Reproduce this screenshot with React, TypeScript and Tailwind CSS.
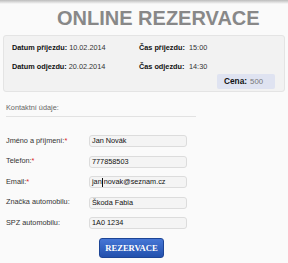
import React from "react";

const info = [
  [
    ["Datum příjezdu:", "10.02.2014"],
    ["Čas příjezdu:", "15:00"],
  ],
  [
    ["Datum odjezdu:", "20.02.2014"],
    ["Čas odjezdu:", "14:30"],
  ],
];

const fields = [
  { label: "Jméno a příjmení:", req: true, value: "Jan Novák" },
  { label: "Telefon:", req: true, value: "777858503" },
  { label: "Email:", req: true, value: "jan|novak@seznam.cz" },
  { label: "Značka automobilu:", req: false, value: "Škoda Fabia" },
  { label: "SPZ automobilu:", req: false, value: "1A0 1234" },
];

export default function App() {
  return (
    <div className="w-[288px] h-[263px] overflow-hidden bg-[#fafafa] font-['Liberation_Sans',Arial,sans-serif] text-[#333]">
      <div className="h-[4px] bg-linear-to-b from-[#bcbcbc] to-[#fafafa]" />
      <h1 className="mt-[4px] pl-[57px] text-[20px] leading-[20px] font-bold text-[#888]">ONLINE REZERVACE</h1>

      {/* Summary */}
      <div className="mt-[7px] mx-[3px] h-[57px] bg-[#f2f2f2] border border-[#e4e4e4] rounded-[3px] pt-[6px] pl-[8px]">
        {info.map((row, i) => (
          <div key={i} className={`flex items-center h-[12px] text-[7.3px] leading-[12px] whitespace-nowrap ${i ? "mt-[7px]" : ""}`}>
            <span className="w-[127px]">
              <b className="text-[#111] mr-[2px]">{row[0][0]}</b>
              {row[0][1]}
            </span>
            <span className="w-[50px] font-bold text-[#111]">{row[1][0]}</span>
            <span>{row[1][1]}</span>
          </div>
        ))}
        <div className="flex justify-end mt-[1px] pr-[9px]">
          <div className="w-[58px] h-[15px] bg-[#dfe3f1] rounded-[2px] flex items-center pl-[7px]">
            <span className="text-[8.3px] font-bold text-[#111]">Cena:</span>
            <span className="ml-[3px] text-[7.8px] text-[#777]">500</span>
          </div>
        </div>
      </div>

      {/* Contact */}
      <div className="mt-[12px] pl-[6px] text-[7.3px] leading-[8px] h-[8px] text-[#666]">Kontaktní údaje:</div>
      <div className="mt-[4px] ml-[6px] w-[190px] h-px bg-[#e2e2e2]" />

      <div className="mt-[18px] flex flex-col gap-[8.5px]">
        {fields.map((f) => (
          <div key={f.label} className="flex items-center h-[12px] pl-[6px] text-[7.3px]">
            <span className="w-[83px] text-[#333]">
              {f.label}
              {f.req && <span className="text-[#e02020]">*</span>}
            </span>
            <div className="w-[98px] h-[12px] bg-[#f4f4f4] border border-[#dcdcdc] rounded-[3px] pl-[2px] flex items-center text-[#111] leading-none">
              {f.value.includes("|") ? (
                <>
                  {f.value.split("|")[0]}
                  <span className="inline-block w-px h-[9px] bg-[#111] mx-[0.5px]" />
                  {f.value.split("|")[1]}
                </>
              ) : (
                f.value
              )}
            </div>
          </div>
        ))}
      </div>

      <div className="mt-[9px] flex pl-[99px]">
        <button className="w-[65px] h-[20px] rounded-[3px] border border-[#1d4596] bg-linear-to-b from-[#4677d6] to-[#2250ad] text-white font-['Liberation_Serif','Times_New_Roman',serif] font-bold text-[8.6px] leading-none">
          REZERVACE
        </button>
      </div>
    </div>
  );
}
